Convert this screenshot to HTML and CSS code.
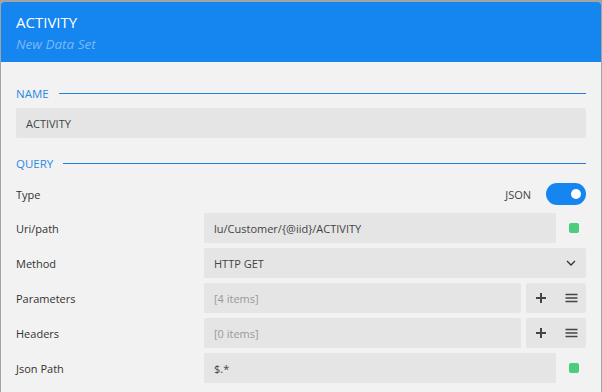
FILE: index.html
```html
<!DOCTYPE html>
<html lang="en">
<head>
    <meta charset="UTF-8">
    <meta name="viewport" content="width=device-width, initial-scale=1.0">
    <title>Data Set</title>
    <link rel="stylesheet" href="styles.css">
</head>
<body>
    <div class="panel">
        <header class="panel-head">
            <div class="panel-title">ACTIVITY</div>
            <div class="panel-subtitle">New Data Set</div>
        </header>

        <div class="panel-body">
            <div class="section-title">NAME</div>
            <div class="input name-input">ACTIVITY</div>

            <div class="section-title query-title">QUERY</div>

            <div class="row row-type">
                <div class="row-label">Type</div>
                <div class="type-value">
                    <span>JSON</span>
                    <span class="toggle"><span class="knob"></span></span>
                </div>
            </div>

            <div class="rows">
                <div class="row">
                    <div class="row-label">Uri/path</div>
                    <div class="row-control">
                        <div class="input">lu/Customer/{@iid}/ACTIVITY</div>
                        <div class="status"><span class="status-dot"></span></div>
                    </div>
                </div>

                <div class="row">
                    <div class="row-label">Method</div>
                    <div class="row-control">
                        <div class="input select">
                            <span>HTTP GET</span>
                            <svg width="10" height="6" viewBox="0 0 10 6"><polyline points="1,1 5,5 9,1" fill="none" stroke="#333" stroke-width="1.3"/></svg>
                        </div>
                    </div>
                </div>

                <div class="row">
                    <div class="row-label">Parameters</div>
                    <div class="row-control">
                        <div class="input placeholder">[4 items]</div>
                        <div class="btn-group">
                            <span class="icon-btn">
                                <svg width="12" height="12" viewBox="0 0 12 12"><path d="M6 1v10M1 6h10" stroke="#444" stroke-width="2"/></svg>
                            </span>
                            <span class="icon-btn">
                                <svg width="13" height="10" viewBox="0 0 13 10"><path d="M0.5 1.5h12M0.5 5h12M0.5 8.5h12" stroke="#444" stroke-width="1.4"/></svg>
                            </span>
                        </div>
                    </div>
                </div>

                <div class="row">
                    <div class="row-label">Headers</div>
                    <div class="row-control">
                        <div class="input placeholder">[0 items]</div>
                        <div class="btn-group">
                            <span class="icon-btn">
                                <svg width="12" height="12" viewBox="0 0 12 12"><path d="M6 1v10M1 6h10" stroke="#444" stroke-width="2"/></svg>
                            </span>
                            <span class="icon-btn">
                                <svg width="13" height="10" viewBox="0 0 13 10"><path d="M0.5 1.5h12M0.5 5h12M0.5 8.5h12" stroke="#444" stroke-width="1.4"/></svg>
                            </span>
                        </div>
                    </div>
                </div>

                <div class="row">
                    <div class="row-label">Json Path</div>
                    <div class="row-control">
                        <div class="input">$.*</div>
                        <div class="status"><span class="status-dot"></span></div>
                    </div>
                </div>
            </div>
        </div>
    </div>
</body>
</html>
```

FILE: styles.css
```css
:root {
    --brand-blue: #1585f0;
    --label-blue: #2b88e6;
    --panel-bg: #f2f2f2;
    --field-bg: #e5e5e5;
    --text: #333;
}

body {
    margin: 0;
    background: #a3a3a3;
    font-family: 'Open Sans', 'Noto Sans', sans-serif;
    font-size: 11px;
    color: var(--text);
    overflow: hidden;
}

.panel {
    margin: 2px 1px 0 1px;
    width: 600px;
    height: 390px;
    background: var(--panel-bg);
    border-radius: 3px 3px 0 0;
    overflow: hidden;
}

/* header */
.panel-head {
    height: 60px;
    box-sizing: border-box;
    padding: 9px 15px 0;
    background: var(--brand-blue);
}

.panel-title {
    color: #fff;
    font-size: 15px;
    line-height: 22px;
}

.panel-subtitle {
    color: #7cb8f6;
    font-size: 13.5px;
    font-style: italic;
    line-height: 22px;
}

.panel-body {
    padding: 22px 15px 0;
}

/* section titles with rule */
.section-title {
    display: flex;
    align-items: center;
    gap: 10px;
    height: 18px;
    color: var(--label-blue);
    font-size: 11.5px;
}

.section-title::after {
    content: "";
    flex: 1;
    height: 1px;
    background: #1f80e0;
}

.query-title {
    margin-top: 16px;
}

.input {
    display: flex;
    align-items: center;
    height: 30px;
    box-sizing: border-box;
    padding: 0 10px;
    background: var(--field-bg);
    border-radius: 2px;
    color: #444;
    flex: 1;
    min-width: 0;
}

.name-input {
    margin-top: 6px;
}

.placeholder {
    color: #999;
}

.select {
    justify-content: space-between;
    padding-right: 10px;
}

/* rows */
.row {
    display: grid;
    grid-template-columns: 188px 1fr;
    align-items: center;
}

.row-type {
    height: 22px;
    margin-top: 11px;
}

.type-value {
    display: flex;
    justify-content: flex-end;
    align-items: center;
    gap: 15px;
    color: #444;
}

.toggle {
    display: flex;
    align-items: center;
    justify-content: flex-end;
    width: 40px;
    height: 22px;
    box-sizing: border-box;
    padding-right: 5px;
    border-radius: 11px;
    background: var(--brand-blue);
}

.knob {
    width: 10px;
    height: 10px;
    border-radius: 50%;
    background: #fff;
}

.rows {
    display: flex;
    flex-direction: column;
    gap: 5px;
    margin-top: 8px;
}

.row-control {
    display: flex;
    gap: 5px;
    height: 30px;
}

.status {
    display: flex;
    align-items: center;
    justify-content: center;
    width: 25px;
}

.status-dot {
    width: 10px;
    height: 10px;
    border-radius: 2px;
    background: #4ccd7a;
}

.btn-group {
    display: flex;
    width: 60px;
    background: var(--field-bg);
    border-radius: 2px;
}

.icon-btn {
    flex: 1;
    display: flex;
    align-items: center;
    justify-content: center;
}
```
